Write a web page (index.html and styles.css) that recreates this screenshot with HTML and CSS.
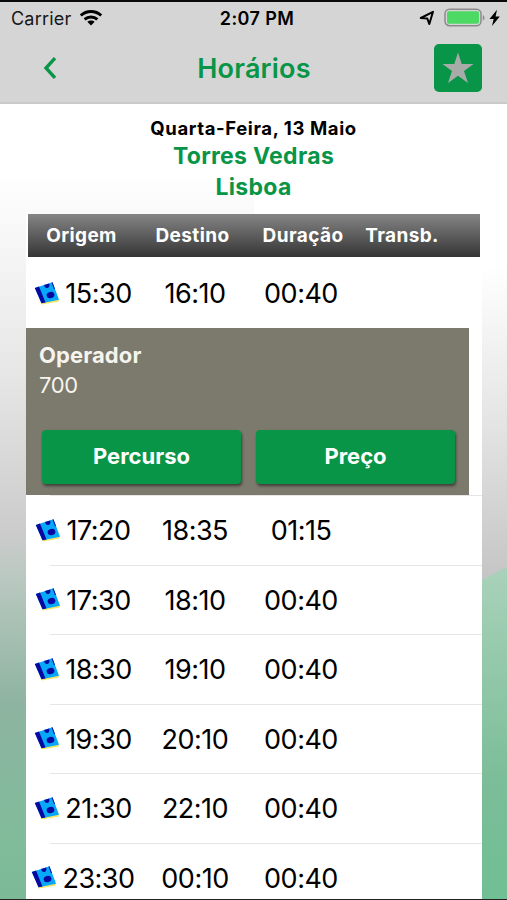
FILE: index.html
```html
<!DOCTYPE html>
<html lang="pt">
<head>
  <meta charset="UTF-8">
  <meta name="viewport" content="width=device-width, initial-scale=1.0">
  <title>Horários</title>
  <link rel="stylesheet" href="styles.css">
</head>
<body>
  <svg width="0" height="0" class="defs">
    <symbol id="logo" viewBox="0 0 26 24">
      <path d="M6.5 21.5 24 18 25 20.5 8 23.5z" fill="#f5e663"/>
      <path d="M.8 7 18.5 1.3 25 18.8 7.5 22.3z" fill="#08a8f8"/>
      <path d="M.8 7 5 5.600 11.500 21.500 7.500 22.300z" fill="#0808a0"/>
      <path d="M10 4.100 15.300 2.400c.5 2.500-.3 4-1.800 4.500-1.500.400-2.900-.600-3.500-2.800z" fill="#0808a0"/>
      <path d="M17.500 1.600 18.500 1.300 21 8 20 8.200z" fill="#0808a0"/>
      <ellipse cx="16.500" cy="14" rx="3.900" ry="3.200" transform="rotate(-15 16.500 14)" fill="#0808a0"/>
    </symbol>
  </svg>

  <div class="screen">
    <svg class="backdrop" viewBox="0 0 507 797" preserveAspectRatio="none">
      <defs>
        <linearGradient id="left-fade" gradientUnits="userSpaceOnUse" x1="0" y1="70" x2="0" y2="797">
          <stop offset="0" stop-color="#fff"/>
          <stop offset=".28" stop-color="#e6e6e6"/>
          <stop offset=".5" stop-color="#cbcbcb"/>
          <stop offset=".56" stop-color="#b9c8c0"/>
          <stop offset=".73" stop-color="#8eb4a1"/>
          <stop offset=".9" stop-color="#81bb9b"/>
          <stop offset="1" stop-color="#7cba97"/>
        </linearGradient>
        <linearGradient id="right-fade" gradientUnits="userSpaceOnUse" x1="0" y1="165" x2="0" y2="480">
          <stop offset="0" stop-color="#fff"/>
          <stop offset=".5" stop-color="#e4e4e4"/>
          <stop offset="1" stop-color="#c4c4c4"/>
        </linearGradient>
        <linearGradient id="hill" gradientUnits="userSpaceOnUse" x1="0" y1="465" x2="0" y2="797">
          <stop offset="0" stop-color="#a9d2ba"/>
          <stop offset=".65" stop-color="#7bbd98"/>
          <stop offset="1" stop-color="#71bf95"/>
        </linearGradient>
      </defs>
      <rect width="254" height="797" fill="url(#left-fade)"/>
      <rect x="254" width="253" height="797" fill="url(#right-fade)"/>
      <path d="M254 560 Q440 505 482 478 L507 465 V797 H254z" fill="url(#hill)"/>
    </svg>

    <header class="topbar">
      <div class="status-bar">
        <div class="carrier">
          <span>Carrier</span>
          <svg width="24" height="18" viewBox="0 0 24 18">
            <g fill="none" stroke="#000" stroke-width="3">
              <path d="M1.8 6.5c5.8-5.4 14.6-5.4 20.4 0"/>
              <path d="M5.6 10.4c3.7-3.3 9.1-3.3 12.8 0"/>
            </g>
            <path d="M12 16.5 8.3 12.8c2.1-1.8 5.3-1.8 7.4 0z"/>
          </svg>
        </div>
        <div class="clock">2:07 PM</div>
        <div class="indicators">
          <svg class="location" width="16" height="16" viewBox="0 0 16 16">
            <path d="M1.8 8 14 1.8 10.3 14 8.3 8.5z" fill="none" stroke="#000" stroke-width="2" stroke-linejoin="round"/>
          </svg>
          <svg width="42" height="20" viewBox="0 0 42 20">
            <rect x="1" y="1.2" width="36" height="16.5" rx="4.5" fill="none" stroke="#8b8b8b" stroke-width="1.5"/>
            <rect x="3" y="3.2" width="32" height="12.5" rx="2" fill="#4cd964"/>
            <path d="M38.8 7v5.5c2.3-1 2.3-4.500 0-5.500z" fill="#8b8b8b"/>
          </svg>
          <svg width="11" height="18" viewBox="0 0 11 18">
            <path d="M8 .8.5 10h4.2L3 17l7.8-9.5H6.6z"/>
          </svg>
        </div>
      </div>
      <nav class="nav">
        <svg class="back" width="14" height="24" viewBox="0 0 14 24">
          <path d="M12 2.2 3 12l9 9.8" fill="none" stroke="#089547" stroke-width="3.4"/>
        </svg>
        <h1>Horários</h1>
        <div class="favorite">
          <svg width="32" height="32" viewBox="0 0 32 32">
            <path d="M16 .5 19.7 12H31.5L22 19l4 12-10-7.3L6 31l4-12L.5 12h11.8z" fill="#a9aba9"/>
          </svg>
        </div>
      </nav>
    </header>

    <section class="trip">
      <p class="date">Quarta-Feira, 13 Maio</p>
      <p class="station">Torres Vedras</p>
      <p class="station">Lisboa</p>
    </section>

    <main class="timetable">
      <div class="table-head">
        <span>Origem</span>
        <span>Destino</span>
        <span>Duração</span>
        <span>Transb.</span>
      </div>

      <div class="row first">
        <div class="cell origin"><svg class="logo"><use href="#logo"/></svg>15:30</div>
        <div class="cell">16:10</div>
        <div class="cell">00:40</div>
      </div>

      <div class="details">
        <h2>Operador</h2>
        <p>700</p>
        <div class="buttons">
          <div class="btn">Percurso</div>
          <div class="btn">Preço</div>
        </div>
      </div>

      <div class="row">
        <div class="cell origin"><svg class="logo"><use href="#logo"/></svg>17:20</div>
        <div class="cell">18:35</div>
        <div class="cell">01:15</div>
      </div>
      <div class="row">
        <div class="cell origin"><svg class="logo"><use href="#logo"/></svg>17:30</div>
        <div class="cell">18:10</div>
        <div class="cell">00:40</div>
      </div>
      <div class="row">
        <div class="cell origin"><svg class="logo"><use href="#logo"/></svg>18:30</div>
        <div class="cell">19:10</div>
        <div class="cell">00:40</div>
      </div>
      <div class="row">
        <div class="cell origin"><svg class="logo"><use href="#logo"/></svg>19:30</div>
        <div class="cell">20:10</div>
        <div class="cell">00:40</div>
      </div>
      <div class="row">
        <div class="cell origin"><svg class="logo"><use href="#logo"/></svg>21:30</div>
        <div class="cell">22:10</div>
        <div class="cell">00:40</div>
      </div>
      <div class="row">
        <div class="cell origin"><svg class="logo"><use href="#logo"/></svg>23:30</div>
        <div class="cell">00:10</div>
        <div class="cell">00:40</div>
      </div>
    </main>
  </div>
</body>
</html>
```

FILE: styles.css
```css
* {
  margin: 0;
  padding: 0;
  box-sizing: border-box;
}

body {
  width: 507px;
  height: 900px;
  font-family: 'Inter', 'Liberation Sans', sans-serif;
  background: #fff;
  color: #000;
  overflow: hidden;
}

svg {
  display: block;
  flex-shrink: 0;
}

.defs {
  position: absolute;
}

.screen {
  position: relative;
  height: 900px;
  border-top: 2px solid #0a0a0a;
  border-bottom: 1px solid #222;
  overflow: hidden;
}

.backdrop {
  position: absolute;
  left: 0;
  bottom: 0;
  width: 507px;
  height: 797px;
  z-index: -1;
}

/* Status bar + navigation */
.topbar {
  height: 102px;
  background: #d5d5d5;
  border-bottom: 2px solid #cacaca;
}

.status-bar {
  display: grid;
  grid-template-columns: 1fr auto 1fr;
  align-items: center;
  height: 32px;
  padding: 0 7px 0 11px;
  font-size: 18px;
}

.carrier {
  display: flex;
  align-items: center;
  gap: 8px;
  letter-spacing: 0.2px;
  color: #161616;
}

.clock {
  margin-left: 3px;
  font-weight: 600;
  font-size: 18px;
  letter-spacing: 0.4px;
}

.indicators {
  display: flex;
  align-items: center;
  justify-content: flex-end;
  gap: 3px;
}

.location {
  margin-right: 6px;
}

.nav {
  display: grid;
  grid-template-columns: 48px 1fr 48px;
  align-items: center;
  height: 68px;
  padding: 0 25px 0 26px;
}

.back {
  margin-left: 17px;
}

.nav h1 {
  font-size: 27px;
  font-weight: 600;
  letter-spacing: 0.2px;
  text-align: center;
  color: #089547;
}

.favorite {
  display: flex;
  align-items: center;
  justify-content: center;
  width: 48px;
  height: 48px;
  border-radius: 5px;
  background: #089547;
}

/* Trip summary */
.trip {
  height: 110px;
  padding-top: 11px;
  text-align: center;
}

.date {
  font-size: 18.5px;
  font-weight: 700;
  line-height: 26px;
  letter-spacing: 0.6px;
}

.station {
  font-size: 23px;
  font-weight: 700;
  line-height: 31px;
  letter-spacing: 0.3px;
  color: #089547;
}

/* Timetable */
.timetable {
  width: 456px;
  margin-left: 26px;
  background: #fff;
}

.table-head {
  display: grid;
  grid-template-columns: 107px 115px 106px 92px;
  align-items: center;
  height: 43px;
  margin: 0 2px;
  font-size: 19px;
  font-weight: 700;
  letter-spacing: 0.4px;
  text-align: center;
  color: #fff;
  background: linear-gradient(#858585, #353535);
}

.row {
  display: grid;
  grid-template-columns: 116px 106px 106px 1fr;
  align-items: center;
  height: 69.5px;
  padding-top: 2px;
  font-size: 27px;
  letter-spacing: -0.5px;
  background: linear-gradient(#e6e6e6, #e6e6e6) 24px 0 / 100% 1px no-repeat;
}

.row.first {
  height: 71px;
  background: none;
}

.cell {
  text-align: center;
}

.origin {
  display: flex;
  align-items: center;
  justify-content: center;
  gap: 5px;
  padding-right: 2px;
}

.logo {
  width: 26px;
  height: 24px;
  margin-bottom: 2px;
}

/* Expanded row */
.details {
  width: 443px;
  height: 167px;
  padding: 13px 13px 11px;
  display: flex;
  flex-direction: column;
  background: #7c796d;
  color: #f6f4ee;
}

.details h2 {
  font-size: 22px;
  font-weight: 700;
  line-height: 29px;
  letter-spacing: 0.1px;
}

.details p {
  font-size: 22px;
  line-height: 30px;
  letter-spacing: -0.4px;
}

.buttons {
  display: flex;
  gap: 15px;
  margin: auto 1px 0 3px;
}

.btn {
  width: 199px;
  height: 54px;
  line-height: 53px;
  border-radius: 4px;
  font-size: 22px;
  font-weight: 700;
  text-align: center;
  color: #fff;
  background: #089547;
  box-shadow: 1px 2px 3px rgba(0, 0, 0, 0.5);
}
```
